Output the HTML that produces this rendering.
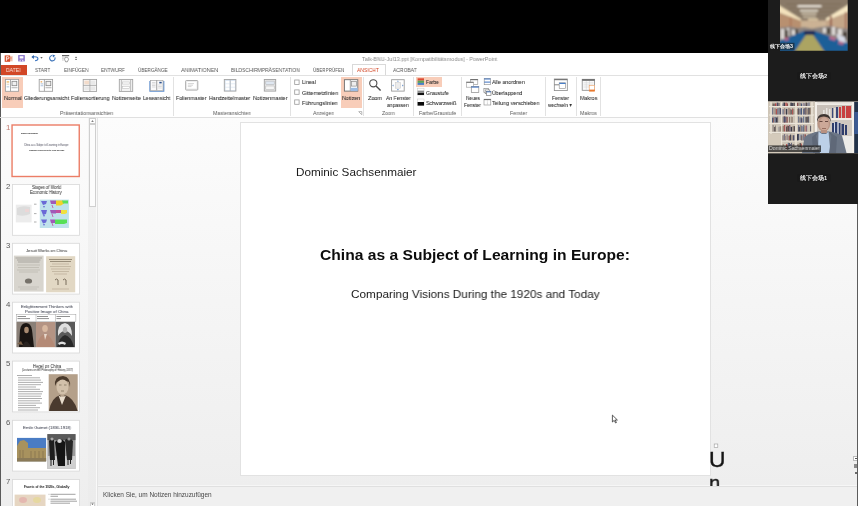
<!DOCTYPE html>
<html><head><meta charset="utf-8">
<style>
*{margin:0;padding:0;box-sizing:border-box}
html,body{width:858px;height:506px;overflow:hidden;background:#000;font-family:"Liberation Sans",sans-serif;position:relative}
.a{position:absolute}
.t{position:absolute;white-space:nowrap;line-height:1;transform-origin:0 0;will-change:transform}
.vl{will-change:transform}
svg{position:absolute;overflow:visible}
</style></head><body>
<div class="a" style="left:0px;top:53px;width:858px;height:453px;background:#fff;"></div>
<div class="a" style="left:0px;top:53px;width:1px;height:453px;background:#5a5a5a;"></div>
<div class="t" style="left:361.80px;top:56.86px;font-size:5.60px;color:#8a8a8a;transform:scaleX(0.968);">Talk-BNU-Jul13.ppt [Kompatibilitätsmodus] - PowerPoint</div>
<div class="a" style="left:1px;top:64.6px;width:26px;height:10.8px;background:#d24726;"></div>
<div class="a" style="left:0px;top:75px;width:858px;height:1px;background:#e1e1e1;"></div>
<div class="a" style="left:351.6px;top:64.3px;width:34px;height:11px;background:#fff;border:1px solid #d9d9d9;border-bottom:none"></div>
<div class="t" style="left:6.40px;top:67.42px;font-size:6.00px;color:#fbe3da;transform:scaleX(0.848);">DATEI</div>
<div class="t" style="left:34.70px;top:67.42px;font-size:6.00px;color:#555555;transform:scaleX(0.795);">START</div>
<div class="t" style="left:63.50px;top:67.42px;font-size:6.00px;color:#555555;transform:scaleX(0.790);">EINFÜGEN</div>
<div class="t" style="left:100.80px;top:67.42px;font-size:6.00px;color:#555555;transform:scaleX(0.793);">ENTWURF</div>
<div class="t" style="left:138.10px;top:67.42px;font-size:6.00px;color:#555555;transform:scaleX(0.775);">ÜBERGÄNGE</div>
<div class="t" style="left:180.90px;top:67.42px;font-size:6.00px;color:#555555;transform:scaleX(0.900);">ANIMATIONEN</div>
<div class="t" style="left:230.80px;top:67.42px;font-size:6.00px;color:#555555;transform:scaleX(0.831);">BILDSCHIRMPRÄSENTATION</div>
<div class="t" style="left:313.10px;top:67.42px;font-size:6.00px;color:#555555;transform:scaleX(0.755);">ÜBERPRÜFEN</div>
<div class="t" style="left:357.40px;top:67.42px;font-size:6.00px;color:#d24726;transform:scaleX(0.832);">ANSICHT</div>
<div class="t" style="left:392.80px;top:67.42px;font-size:6.00px;color:#555555;transform:scaleX(0.833);">ACROBAT</div>
<div class="a" style="left:0px;top:117px;width:858px;height:1px;background:#e0e0e0;"></div>
<div class="a" style="left:173px;top:76.5px;width:1px;height:39px;background:#e2e2e2;"></div>
<div class="a" style="left:290px;top:76.5px;width:1px;height:39px;background:#e2e2e2;"></div>
<div class="a" style="left:363px;top:76.5px;width:1px;height:39px;background:#e2e2e2;"></div>
<div class="a" style="left:413px;top:76.5px;width:1px;height:39px;background:#e2e2e2;"></div>
<div class="a" style="left:461px;top:76.5px;width:1px;height:39px;background:#e2e2e2;"></div>
<div class="a" style="left:545px;top:76.5px;width:1px;height:39px;background:#e2e2e2;"></div>
<div class="a" style="left:576px;top:76.5px;width:1px;height:39px;background:#e2e2e2;"></div>
<div class="a" style="left:600px;top:76.5px;width:1px;height:39px;background:#e2e2e2;"></div>
<div class="a" style="left:2.3px;top:77px;width:20.3px;height:30.8px;background:#f8cdb9;"></div>
<div class="a" style="left:341.2px;top:77px;width:20.5px;height:30.6px;background:#f8cdb9;"></div>
<div class="a" style="left:415.8px;top:77.3px;width:25.9px;height:9.5px;background:#f8cdb9;"></div>
<div class="t" style="left:3.70px;top:94.52px;font-size:6.00px;color:#262626;transform:scaleX(0.921);-webkit-text-stroke:0.05px #303030;">Normal</div>
<div class="t" style="left:23.60px;top:94.52px;font-size:6.00px;color:#262626;transform:scaleX(0.878);-webkit-text-stroke:0.05px #303030;">Gliederungsansicht</div>
<div class="t" style="left:71.00px;top:94.52px;font-size:6.00px;color:#262626;transform:scaleX(0.893);-webkit-text-stroke:0.05px #303030;">Foliensortierung</div>
<div class="t" style="left:111.70px;top:94.52px;font-size:6.00px;color:#262626;transform:scaleX(0.875);-webkit-text-stroke:0.05px #303030;">Notizenseite</div>
<div class="t" style="left:143.00px;top:94.52px;font-size:6.00px;color:#262626;transform:scaleX(0.853);-webkit-text-stroke:0.05px #303030;">Leseansicht</div>
<div class="t" style="left:176.40px;top:94.52px;font-size:6.00px;color:#262626;transform:scaleX(0.877);-webkit-text-stroke:0.05px #303030;">Folienmaster</div>
<div class="t" style="left:209.00px;top:94.52px;font-size:6.00px;color:#262626;transform:scaleX(0.878);-webkit-text-stroke:0.05px #303030;">Handzettelmaster</div>
<div class="t" style="left:253.00px;top:94.52px;font-size:6.00px;color:#262626;transform:scaleX(0.889);-webkit-text-stroke:0.05px #303030;">Notizenmaster</div>
<div class="t" style="left:342.30px;top:94.52px;font-size:6.00px;color:#262626;transform:scaleX(0.895);-webkit-text-stroke:0.05px #303030;">Notizen</div>
<div class="t" style="left:368.00px;top:94.52px;font-size:6.00px;color:#262626;transform:scaleX(0.913);-webkit-text-stroke:0.05px #303030;">Zoom</div>
<div class="t" style="left:385.80px;top:94.52px;font-size:6.00px;color:#262626;transform:scaleX(0.842);-webkit-text-stroke:0.05px #303030;">An Fenster</div>
<div class="t" style="left:466.00px;top:94.52px;font-size:6.00px;color:#262626;transform:scaleX(0.807);-webkit-text-stroke:0.05px #303030;">Neues</div>
<div class="t" style="left:552.40px;top:94.52px;font-size:6.00px;color:#262626;transform:scaleX(0.836);-webkit-text-stroke:0.05px #303030;">Fenster</div>
<div class="t" style="left:579.70px;top:94.52px;font-size:6.00px;color:#262626;transform:scaleX(0.880);-webkit-text-stroke:0.05px #303030;">Makros</div>
<div class="t" style="left:387.30px;top:101.92px;font-size:6.00px;color:#262626;transform:scaleX(0.834);-webkit-text-stroke:0.05px #303030;">anpassen</div>
<div class="t" style="left:464.20px;top:101.92px;font-size:6.00px;color:#262626;transform:scaleX(0.826);-webkit-text-stroke:0.05px #303030;">Fenster</div>
<div class="t" style="left:547.90px;top:101.92px;font-size:6.00px;color:#262626;transform:scaleX(0.795);-webkit-text-stroke:0.05px #303030;">wechseln ▾</div>
<div class="t" style="left:302.00px;top:79.32px;font-size:6.00px;color:#262626;transform:scaleX(0.862);-webkit-text-stroke:0.05px #303030;">Lineal</div>
<div class="t" style="left:302.00px;top:89.62px;font-size:6.00px;color:#262626;transform:scaleX(0.905);-webkit-text-stroke:0.05px #303030;">Gitternetzlinien</div>
<div class="t" style="left:302.00px;top:99.52px;font-size:6.00px;color:#262626;transform:scaleX(0.907);-webkit-text-stroke:0.05px #303030;">Führungslinien</div>
<div class="t" style="left:425.70px;top:79.22px;font-size:6.00px;color:#262626;transform:scaleX(0.823);-webkit-text-stroke:0.05px #303030;">Farbe</div>
<div class="t" style="left:425.70px;top:89.62px;font-size:6.00px;color:#262626;transform:scaleX(0.865);-webkit-text-stroke:0.05px #303030;">Graustufe</div>
<div class="t" style="left:425.70px;top:99.62px;font-size:6.00px;color:#262626;transform:scaleX(0.849);-webkit-text-stroke:0.05px #303030;">Schwarzweiß</div>
<div class="t" style="left:492.40px;top:79.32px;font-size:6.00px;color:#262626;transform:scaleX(0.886);-webkit-text-stroke:0.05px #303030;">Alle anordnen</div>
<div class="t" style="left:492.40px;top:89.62px;font-size:6.00px;color:#262626;transform:scaleX(0.882);-webkit-text-stroke:0.05px #303030;">Überlappend</div>
<div class="t" style="left:492.40px;top:99.52px;font-size:6.00px;color:#262626;transform:scaleX(0.894);-webkit-text-stroke:0.05px #303030;">Teilung verschieben</div>
<div class="t" style="left:60.30px;top:110.73px;font-size:5.40px;color:#5a5a5a;transform:scaleX(0.950);">Präsentationsansichten</div>
<div class="t" style="left:213.00px;top:110.73px;font-size:5.40px;color:#5a5a5a;transform:scaleX(0.959);">Masteransichten</div>
<div class="t" style="left:313.00px;top:110.73px;font-size:5.40px;color:#5a5a5a;transform:scaleX(0.933);">Anzeigen</div>
<div class="t" style="left:382.40px;top:110.73px;font-size:5.40px;color:#5a5a5a;transform:scaleX(0.935);">Zoom</div>
<div class="t" style="left:418.70px;top:110.73px;font-size:5.40px;color:#5a5a5a;transform:scaleX(0.949);">Farbe/Graustufe</div>
<div class="t" style="left:510.30px;top:110.73px;font-size:5.40px;color:#5a5a5a;transform:scaleX(0.929);">Fenster</div>
<div class="t" style="left:580.00px;top:110.73px;font-size:5.40px;color:#5a5a5a;transform:scaleX(0.960);">Makros</div>
<svg style="left:0;top:0" width="858" height="506" viewBox="0 0 858 506">
<!-- QAT -->
<rect x="9.2" y="55.9" width="3.5" height="5.5" fill="#f4cdbf"/>
<rect x="9.8" y="57.1" width="2.3" height="0.55" fill="#e58a6c"/><rect x="9.8" y="58.4" width="2.3" height="0.55" fill="#e58a6c"/><rect x="9.8" y="59.7" width="2.3" height="0.55" fill="#e58a6c"/>
<rect x="4.7" y="55.4" width="5.4" height="6.4" fill="#d64e2a"/>
<path d="M6.4 60.8 V56.7 H7.9 Q9.0 56.7 9.0 57.8 Q9.0 58.9 7.9 58.9 H6.4" fill="none" stroke="#fff" stroke-width="0.85"/>
<rect x="18.2" y="55.1" width="6.6" height="6.3" fill="#8670c8"/>
<rect x="19.6" y="56.2" width="3.8" height="2.3" fill="#fff"/>
<rect x="19.6" y="59.7" width="3.8" height="1.7" fill="#e8e2f6"/>
<rect x="20.7" y="60" width="1.4" height="1.4" fill="#8670c8"/>
<path d="M32.6 56.9 Q37.9 56.2 37.9 58.6 Q37.9 60.7 35 60.7" fill="none" stroke="#3f78c2" stroke-width="1.15"/>
<path d="M31.4 57 L33.9 55.1 L33.9 58.9 Z" fill="#2f62a8"/>
<path d="M40.3 57.1 L42.7 57.1 L41.5 58.8 Z" fill="#666"/>
<path d="M54.9 57.3 A2.7 2.7 0 1 1 52.1 55.5" fill="none" stroke="#3a72b8" stroke-width="1.05"/>
<path d="M52.4 54.6 L55.4 55.6 L53.0 57.4 Z" fill="#3a72b8"/>
<rect x="62" y="55.1" width="7.2" height="1.1" fill="#555"/>
<path d="M62.3 57.2 H63.6 M62.3 58.6 H63.6 M62.3 60 H63.6" stroke="#888" stroke-width="0.6"/>
<path d="M65 57.3 L67.6 57.3 L68.6 59.2 L67.4 61.8 L65.6 61.8 L64.6 59.5 Z" fill="none" stroke="#777" stroke-width="0.7"/>
<rect x="75.1" y="56.9" width="1.9" height="0.8" fill="#555"/><rect x="75.1" y="58.9" width="1.9" height="0.8" fill="#555"/>

<!-- Normal -->
<rect x="5.4" y="79.4" width="13.2" height="11.9" fill="#fff" stroke="#9c9c9c" stroke-width="0.85"/>
<line x1="10.5" y1="79.4" x2="10.5" y2="91.3" stroke="#9c9c9c" stroke-width="0.85"/>
<rect x="6.6" y="81" width="2.6" height="1.8" fill="#f0c98a"/><rect x="6.6" y="83.6" width="2.6" height="1.5" fill="#e8dccc"/><rect x="6.6" y="86" width="2.6" height="1.5" fill="#c9d6e6"/>
<rect x="12" y="81.3" width="4.8" height="4.4" fill="#f0f0f0" stroke="#858585" stroke-width="0.8"/>
<rect x="11.5" y="87" width="6" height="1.3" fill="#c4c4c4"/>
<!-- Gliederung -->
<rect x="39.2" y="79.4" width="13.4" height="11.9" fill="#fff" stroke="#9c9c9c" stroke-width="0.85"/>
<line x1="44.4" y1="79.4" x2="44.4" y2="91.3" stroke="#9c9c9c" stroke-width="0.85"/>
<rect x="40.6" y="81" width="1.6" height="1.6" fill="#f0b978"/><rect x="40.6" y="83.5" width="2.6" height="0.8" fill="#9bb3d3"/><rect x="40.6" y="85.4" width="2.6" height="0.8" fill="#9bb3d3"/>
<rect x="46" y="81.3" width="4.8" height="4.4" fill="#f0f0f0" stroke="#858585" stroke-width="0.8"/>
<rect x="45.5" y="87" width="6" height="1.3" fill="#c4c4c4"/>
<!-- Foliensortierung -->
<rect x="83.2" y="79.4" width="13.4" height="12" fill="#fafafa" stroke="#a0a0a0" stroke-width="0.85"/>
<rect x="84.3" y="80.6" width="4.8" height="3.8" fill="#f3dccb"/><rect x="90.6" y="80.6" width="4.8" height="3.8" fill="#e9e9e9"/>
<rect x="84.3" y="86.4" width="4.8" height="3.8" fill="#e9e9e9"/><rect x="90.6" y="86.4" width="4.8" height="3.8" fill="#e9e9e9"/>
<line x1="83.2" y1="85.4" x2="96.6" y2="85.4" stroke="#a0a0a0" stroke-width="0.8"/>
<line x1="89.9" y1="79.4" x2="89.9" y2="91.4" stroke="#a0a0a0" stroke-width="0.8"/>
<!-- Notizenseite -->
<rect x="119.3" y="79.4" width="13.4" height="12" fill="#f4f4f4" stroke="#a0a0a0" stroke-width="0.85"/>
<line x1="121.4" y1="80" x2="121.4" y2="91" stroke="#b0b0b0" stroke-width="0.8"/><line x1="130.6" y1="80" x2="130.6" y2="91" stroke="#b0b0b0" stroke-width="0.8"/>
<rect x="122.5" y="82" width="7" height="2" fill="#fff" stroke="#b8b8b8" stroke-width="0.5"/>
<rect x="122.5" y="86.3" width="7" height="2" fill="#fff" stroke="#b8b8b8" stroke-width="0.5"/>
<!-- Leseansicht -->
<path d="M149.9 81 L149.9 91.3 L163.8 91.3 L163.8 81" fill="none" stroke="#5b8ccc" stroke-width="1.1"/>
<rect x="150.6" y="80.3" width="6.1" height="10.3" fill="#fbfbfb" stroke="#9a9a9a" stroke-width="0.6"/>
<rect x="156.9" y="80.3" width="6.1" height="10.3" fill="#fbfbfb" stroke="#9a9a9a" stroke-width="0.6"/>
<path d="M152 82.5 H155.5 M152 84 H155.5 M152 85.5 H155.5 M152 87 H155.5" stroke="#bbb" stroke-width="0.5"/>
<rect x="159.3" y="81.8" width="2.4" height="1.6" fill="#2b4f8a"/>
<path d="M158.2 85 H161.8 M158.2 86.5 H161.8 M158.2 88 H161.8" stroke="#bbb" stroke-width="0.5"/>
<!-- Folienmaster -->
<rect x="185.6" y="80.5" width="12.2" height="9.6" rx="0.8" fill="#efefef" stroke="#a0a0a0" stroke-width="0.85"/>
<rect x="187" y="82" width="9.4" height="6.4" fill="#fff"/>
<path d="M187.8 83.6 H194 M187.8 85.2 H193 M187.8 86.6 H191.5" stroke="#b9b9b9" stroke-width="0.6"/>
<!-- Handzettelmaster -->
<rect x="224.3" y="79.5" width="11.6" height="11.6" fill="#d9e4f1" stroke="#a4a4a4" stroke-width="0.9"/>
<rect x="225.6" y="80.9" width="4" height="2.6" fill="#fff"/><rect x="230.9" y="80.9" width="4" height="2.6" fill="#fff"/>
<rect x="225.6" y="84.2" width="4" height="2.6" fill="#fff"/><rect x="230.9" y="84.2" width="4" height="2.6" fill="#fff"/>
<rect x="225.6" y="87.5" width="4" height="2.6" fill="#fff"/><rect x="230.9" y="87.5" width="4" height="2.6" fill="#fff"/>
<line x1="230.2" y1="79.5" x2="230.2" y2="91.1" stroke="#a4a4a4" stroke-width="0.6"/>
<!-- Notizenmaster -->
<rect x="264.3" y="79.5" width="11.4" height="11.6" fill="#e8e8e8" stroke="#a0a0a0" stroke-width="0.9"/>
<rect x="265.8" y="81.1" width="8.4" height="3.6" fill="#dfe7f1" stroke="#b0b0b0" stroke-width="0.5"/>
<rect x="265.8" y="86" width="8.4" height="3.6" fill="#f6f6f6" stroke="#b0b0b0" stroke-width="0.5"/>
<!-- checkboxes -->
<rect x="294.7" y="80" width="4.4" height="4.4" fill="#fff" stroke="#9a9a9a" stroke-width="0.8"/>
<rect x="294.7" y="89.9" width="4.4" height="4.4" fill="#fff" stroke="#9a9a9a" stroke-width="0.8"/>
<rect x="294.7" y="99.9" width="4.4" height="4.4" fill="#fff" stroke="#9a9a9a" stroke-width="0.8"/>
<!-- Notizen -->
<rect x="344.4" y="79.7" width="13.4" height="11.4" fill="#fff" stroke="#6e6e6e" stroke-width="0.9"/>
<line x1="350.3" y1="79.7" x2="350.3" y2="91.1" stroke="#8a8a8a" stroke-width="0.8"/>
<rect x="351.6" y="81.5" width="4.8" height="4.6" fill="#eee" stroke="#8a8a8a" stroke-width="0.7"/>
<rect x="350.5" y="87.8" width="7.2" height="3.2" fill="#9cbce4"/>
<!-- launcher -->
<path d="M358.6 111.6 H361.8 V114.8 M358.8 111.8 L361.6 114.6" fill="none" stroke="#888" stroke-width="0.6"/>
<!-- Zoom -->
<circle cx="373.3" cy="83.3" r="3.6" fill="none" stroke="#4a4a4a" stroke-width="1.1"/>
<line x1="376" y1="86" x2="380.6" y2="90.6" stroke="#4a4a4a" stroke-width="1.4"/>
<!-- An Fenster anpassen -->
<rect x="391.6" y="79.7" width="12.6" height="11.4" fill="#fff" stroke="#9a9a9a" stroke-width="0.9"/>
<rect x="395.2" y="82.6" width="5.4" height="5.6" fill="#ececec" stroke="#c4c4c4" stroke-width="0.5"/>
<path d="M397.9 80.4 L396.9 81.6 H398.9 Z M397.9 90.4 L396.9 89.2 H398.9 Z M392.3 85.4 L393.5 84.4 V86.4 Z M403.5 85.4 L402.3 84.4 V86.4 Z" fill="#4f7fc0"/>
<!-- Farbe swatches -->
<rect x="417.6" y="78.3" width="6.4" height="2.3" fill="#dc4a33"/>
<rect x="417.6" y="80.6" width="6.4" height="2.3" fill="#5ba35a"/>
<rect x="417.6" y="82.9" width="6.4" height="2" fill="#4a7fc8"/>
<rect x="417.6" y="88.2" width="6.4" height="6.8" fill="#fff" stroke="#c8c8c8" stroke-width="0.5"/>
<rect x="417.6" y="90.6" width="6.4" height="1.6" fill="#8c8c8c"/>
<rect x="417.6" y="92.6" width="6.4" height="2.4" fill="#111"/>
<rect x="417.6" y="99" width="6.4" height="6.6" fill="#fff" stroke="#c8c8c8" stroke-width="0.5"/>
<rect x="417.6" y="102" width="6.4" height="3.6" fill="#0a0a0a"/>
<!-- Neues Fenster -->
<rect x="470.6" y="79.3" width="7.2" height="5" fill="#fff" stroke="#8a8a8a" stroke-width="0.6"/>
<rect x="470.6" y="79.1" width="7.2" height="1.1" fill="#6a6a6a"/>
<rect x="466.4" y="82" width="7.2" height="5.2" fill="#fff" stroke="#9a9a9a" stroke-width="0.6"/>
<rect x="466.4" y="81.9" width="7.2" height="1" fill="#7a7a7a"/>
<rect x="471.3" y="86.6" width="7.5" height="5.8" fill="#fff" stroke="#8a8a8a" stroke-width="0.7"/>
<rect x="471.3" y="86.5" width="7.5" height="1.1" fill="#3f72c0"/>
<!-- Alle anordnen -->
<rect x="484.2" y="78.5" width="6.2" height="6.2" fill="#fff" stroke="#8a8a8a" stroke-width="0.6"/>
<rect x="484.2" y="78.5" width="6.2" height="1" fill="#3f72c0"/><rect x="484.2" y="81.6" width="6.2" height="1" fill="#3f72c0"/>
<!-- Ueberlappend -->
<rect x="483.9" y="88.6" width="4.6" height="3.8" fill="#fff" stroke="#7a7a7a" stroke-width="0.6"/>
<rect x="485.2" y="89.9" width="4.6" height="3.8" fill="#fff" stroke="#7a7a7a" stroke-width="0.6"/>
<rect x="486.4" y="91.4" width="4.6" height="4" fill="#fff" stroke="#6a6a6a" stroke-width="0.6"/>
<rect x="486.4" y="91.4" width="4.6" height="0.9" fill="#3f72c0"/>
<!-- Teilung -->
<rect x="484" y="99.2" width="6.8" height="5.8" fill="#fff" stroke="#8a8a8a" stroke-width="0.6"/>
<rect x="484" y="99.1" width="6.8" height="1" fill="#6a6a6a"/>
<path d="M487.4 100.5 V104.8" stroke="#999" stroke-width="0.5" stroke-dasharray="0.8 0.5"/>
<!-- Fenster wechseln -->
<rect x="554.3" y="79" width="13" height="11.6" fill="#fff" stroke="#8a8a8a" stroke-width="0.8"/>
<rect x="554.3" y="79" width="13" height="1.2" fill="#777"/>
<line x1="554.3" y1="84.8" x2="559" y2="84.8" stroke="#777" stroke-width="0.9"/>
<rect x="559.2" y="82.8" width="6.4" height="5.6" fill="#fff" stroke="#888" stroke-width="0.6"/>
<rect x="559.2" y="82.8" width="6.4" height="1.2" fill="#4a7fc8"/>
<!-- Makros -->
<rect x="582.2" y="79.3" width="12.4" height="11" fill="#fafafa" stroke="#8a8a8a" stroke-width="0.8"/>
<rect x="582.2" y="79.2" width="12.4" height="1.6" fill="#666"/>
<path d="M583.5 82.8 H593.5 M583.5 84.9 H593.5 M583.5 87 H593.5 M586.3 81 V90 M589.5 81 V90" stroke="#cfcfcf" stroke-width="0.5"/>
<rect x="589.2" y="85.3" width="5.4" height="5.8" fill="#fff" stroke="#f0a060" stroke-width="0.6"/>
<rect x="589.2" y="89.6" width="5.6" height="1.8" fill="#e8782e"/>
</svg>

<!-- main area backgrounds -->
<div class="a" style="left:1px;top:118px;width:87px;height:388px;background:linear-gradient(#fcfcfc,#eeeeee)"></div>
<div class="a" style="left:88px;top:118px;width:8px;height:388px;background:linear-gradient(#f3f3f3,#ececec)"></div>
<div class="a" style="left:88.5px;top:118px;width:7.5px;height:6px;background:#fff;border:0.6px solid #cfcfcf"></div>
<div class="a" style="left:88.5px;top:124px;width:7.5px;height:83px;background:#fcfcfc;border:0.6px solid #cfcfcf"></div>
<div class="a" style="left:89.8px;top:501.5px;width:5.4px;height:5px;background:#fff;border:0.6px solid #cfcfcf"></div>
<div class="a" style="left:96px;top:118px;width:1px;height:388px;background:#f9f9f9"></div>
<div class="a" style="left:97px;top:118px;width:1px;height:388px;background:#e4e4e4"></div>
<div class="a" style="left:98px;top:118px;width:760px;height:368px;background:linear-gradient(#fcfcfc,#eeeeee)"></div>
<div class="a" style="left:98px;top:486px;width:760px;height:1px;background:#e0e0e0"></div>
<div class="a" style="left:98px;top:487px;width:760px;height:19px;background:#f0f0f0"></div>
<!-- slide -->
<div class="a" style="left:240px;top:122px;width:471px;height:354px;background:#e2e2e2"></div>
<div class="a" style="left:241px;top:123px;width:469px;height:352px;background:#fff"></div>
<!-- right edge line -->
<div class="a" style="left:857px;top:53px;width:1px;height:453px;background:#5c5c5c"></div>
<div class="a" style="left:853px;top:455.8px;width:4px;height:5.5px;background:#fff;border:0.5px solid #bbb;border-right:none"></div>
<div class="a" style="left:854.5px;top:458px;width:2.5px;height:0.9px;background:#555"></div>
<div class="a" style="left:853.6px;top:464.3px;width:3.4px;height:3.4px;background:#8a8a8a"></div>
<div class="a" style="left:854.8px;top:472.2px;width:2.2px;height:2px;background:#6a6a6a"></div>
<div class="a" style="left:98px;top:484.5px;width:759px;height:1.2px;background:#f6f6f6"></div>
<!-- thumbnails -->
<svg style="left:0;top:0" width="858" height="506" viewBox="0 0 858 506">
<defs>
<linearGradient id="gb1" x1="0" y1="0" x2="0" y2="1"><stop offset="0" stop-color="#d9d6cf"/><stop offset="1" stop-color="#cfcac0"/></linearGradient>
<linearGradient id="gb2" x1="0" y1="0" x2="0" y2="1"><stop offset="0" stop-color="#e6dcc6"/><stop offset="1" stop-color="#d9ccb0"/></linearGradient>
<linearGradient id="sky" x1="0" y1="0" x2="0" y2="1"><stop offset="0" stop-color="#3d6fc0"/><stop offset="0.5" stop-color="#6b8fc8"/><stop offset="1" stop-color="#9a8a68"/></linearGradient>
</defs>
<!-- 1 -->
<rect x="12.05" y="125.0" width="67.2" height="51.5" fill="#fff" stroke="#ec7d66" stroke-width="1.4"/>
<!-- 2..7 frames -->
<rect x="12.5" y="184.5" width="67" height="50.8" fill="#fff" stroke="#d8d8d8" stroke-width="0.8"/>
<rect x="12.5" y="243.3" width="67" height="50.8" fill="#fff" stroke="#d8d8d8" stroke-width="0.8"/>
<rect x="12.5" y="302.2" width="67" height="50.8" fill="#fff" stroke="#d8d8d8" stroke-width="0.8"/>
<rect x="12.5" y="361.1" width="67" height="50.8" fill="#fff" stroke="#d8d8d8" stroke-width="0.8"/>
<rect x="12.5" y="420.3" width="67" height="50.8" fill="#fff" stroke="#d8d8d8" stroke-width="0.8"/>
<rect x="12.5" y="479.5" width="67" height="50.8" fill="#fff" stroke="#d8d8d8" stroke-width="0.8"/>
<!-- 2 images -->
<rect x="15.8" y="204.7" width="15.8" height="17.7" fill="#ececec"/>
<path d="M17 208 Q22 205 30 207 L30 214 Q24 217 17 215 Z" fill="#dcdcdc"/>
<rect x="25" y="209" width="4" height="3" fill="#ecd6d6"/>
<rect x="39.8" y="199.6" width="29.1" height="28.4" fill="#bfe2ec"/>
<path d="M41 201 h6 l-1 3 l-3 1 z M41 210 h6 l-1 4 l-3 1 z M41 219.5 h6 l-1 3 l-3 1 z" fill="#6a6ad6"/>
<path d="M43 206 l2 0 l-1 2 z M43 215 l2 0 l-1 2 z M43 224 l2 0 l-1 2 z" fill="#6a6ad6"/>
<path d="M50 200.5 h6 v3.5 h-5 z M50 210 h6 v3.5 h-5 z M50 219.5 h5 v3.5 h-4 z" fill="#a05ab8"/>
<path d="M56 200.5 h7 l1 3 l-3 2 h-5 z" fill="#f2d22a"/><path d="M62 200.5 h6 v3 h-5 z" fill="#5ce05c"/>
<path d="M56 210 h5 v3 h-5 z" fill="#c050a0"/><path d="M61 210 h6 v3 l-2 1 h-4 z" fill="#f0e040"/>
<path d="M55 219.5 h12 v3.5 l-3 1 h-9 z" fill="#56e056"/>
<path d="M52 205 l1 3 M52 214 l1 3 M52 223 l1 3" stroke="#c050a0" stroke-width="0.8"/>
<path d="M34 204.2 H36.5 M34 213.6 H36.5 M34 222 H36.5" stroke="#777" stroke-width="0.6"/>
<!-- 3 books -->
<rect x="13.9" y="255.6" width="29.7" height="36" fill="#d8d5ce"/>
<path d="M15.5 258 H42 M17 260 H40.5 M18 262 H39.5" stroke="#8c8880" stroke-width="0.6"/>
<path d="M17 265 H40 M18 267.5 H39 M17 270 H40 M19 272 H38" stroke="#aca89f" stroke-width="0.5"/>
<ellipse cx="28.5" cy="281" rx="3.6" ry="2.6" fill="#76726a"/>
<path d="M18 287 H39 M20 289 H37" stroke="#b0aca4" stroke-width="0.5"/>
<rect x="46.1" y="256.2" width="29.1" height="36.1" fill="#e2d8c4"/>
<path d="M49 259.5 H72 M50 261.5 H71" stroke="#7a6e5c" stroke-width="0.7"/>
<path d="M52 264 H69 M50 266.5 H71 M51 269 H70 M52 271.5 H69 M54 274 H67" stroke="#a89a84" stroke-width="0.5"/>
<path d="M55 280 q1.5 -2 3 0 v5 M63 280 q1.5 -2 3 0 v5" fill="none" stroke="#6e6250" stroke-width="0.9"/>
<path d="M52 289 H69" stroke="#a89a84" stroke-width="0.5"/>
<!-- 4 table + portraits -->
<rect x="16.4" y="314.3" width="59.5" height="7" fill="#fff" stroke="#888" stroke-width="0.4"/>
<path d="M36 314.3 V321.3 M55.5 314.3 V321.3" stroke="#888" stroke-width="0.4"/>
<path d="M17.5 316.5 H26 M17.5 318.6 H30 M37 316.5 H48 M37 318.6 H49 M56.5 316.5 H70 M56.5 318.6 H61" stroke="#444" stroke-width="0.6"/>
<rect x="16.4" y="322" width="19.6" height="25.2" fill="#8a8078"/>
<path d="M19 347 L20 330 Q21 323 26 323 Q31 323 32 330 L34 347 Z" fill="#1a1512"/>
<ellipse cx="26.5" cy="330" rx="2.3" ry="3.2" fill="#a88a70"/>
<path d="M22 347 Q26 336 31 347 Z" fill="#2a2420"/>
<path d="M17 344 l4 -3 l2 4 z" fill="#7a6048"/>
<rect x="36" y="322" width="19.5" height="25.2" fill="#b49484"/>
<ellipse cx="45" cy="328.5" rx="2.8" ry="3.6" fill="#d8b8a0"/>
<path d="M36.5 347 Q38 336 45 334 Q52 336 55 347 Z" fill="#b48a76"/>
<path d="M44 334 l1 6 l2 -6 z" fill="#e8d8cc"/>
<rect x="55.5" y="322" width="19.5" height="25.2" fill="#5a5a5a"/>
<path d="M58 336 Q57 324 65 323 Q72 324 72 336 Q69 331 65 331 Q61 331 58 336 Z" fill="#e0e0e0"/>
<ellipse cx="65" cy="330" rx="2.2" ry="3" fill="#b0b0b0"/>
<path d="M57 347 Q60 336 65 335 Q71 336 74 347 Z" fill="#2a2a2a"/>
<path d="M58 343 q4 -3 8 0 l-1 2 q-3 -2 -6 0 z" fill="#e0e0e0"/>
<!-- 5 text + hegel -->
<path d="M17 375.5 H32 M18 377.8 H40 M18 380.1 H41 M18 382.4 H43 M18 384.7 H41 M18 387 H36 M18 389.3 H40 M18 391.6 H43 M18 393.9 H42 M18 396.2 H41 M18 398.5 H42 M18 400.8 H40 M18 403.1 H42 M18 405.4 H36 M18 407.7 H40 M18 410 H38" stroke="#6a6a6a" stroke-width="0.55"/>
<rect x="48.7" y="374.2" width="29" height="36.7" fill="#b4a08a"/>
<path d="M55 386 Q54 376 63 376 Q71 377 70 387 L69 382 Q63 379 57 382 Z" fill="#4a3a2c"/>
<ellipse cx="62.5" cy="387" rx="6" ry="7.5" fill="#d2c0aa"/>
<path d="M59 385 h2.5 M64 385 h2.5 M61 391 h3" stroke="#6a5a48" stroke-width="0.6"/>
<path d="M49 410.9 Q51 398 60 395 Q62 400 65 395 Q74 398 77.7 410.9 Z" fill="#4a3a2e"/>
<path d="M58.5 395.5 L62 405 L66 395.5 Q62 398 58.5 395.5 Z" fill="#e8dccc"/>
<!-- 6 photos -->
<rect x="17" y="437.9" width="29.1" height="23.4" fill="#4a7cc4"/>
<rect x="17" y="450" width="29.1" height="11.3" fill="#b09a72"/>
<path d="M17 461.3 V446 L20 441 L24 440 L28 443 V448 L46.1 448 V461.3 Z" fill="#a8925e"/>
<path d="M20 450 v8 M23 450 v8 M31 451 v7 M35 451 v7 M39 451 v7 M43 451 v7" stroke="#7a6a48" stroke-width="0.6"/>
<rect x="17" y="458" width="29.1" height="3.3" fill="#8a7a58"/>
<rect x="47.4" y="434.1" width="28.1" height="34.8" fill="#9a9a9a"/>
<rect x="47.4" y="434.1" width="28.1" height="6" fill="#5a5a5a"/>
<rect x="47.4" y="456" width="28.1" height="12.9" fill="#cfcfcf"/>
<path d="M49 441 Q51 437 54 440 L55 460 H50 Z" fill="#1e1e1e"/>
<path d="M55 442 Q60 436 65 442 L65 466 H58 Z" fill="#141414"/>
<path d="M65 440 Q69 436 73 441 L72 460 H67 Z" fill="#262626"/>
<path d="M51 460 v6 M53.5 460 v5 M68 460 v5 M70.5 460 v4" stroke="#222" stroke-width="1"/>
<ellipse cx="59.5" cy="441" rx="2.3" ry="2" fill="#d8d8d8"/>
<ellipse cx="52" cy="439" rx="1.6" ry="1.6" fill="#aaa"/>
<ellipse cx="69" cy="439" rx="1.6" ry="1.6" fill="#999"/>
<!-- 7 -->
<rect x="14.6" y="494.6" width="30.9" height="12" fill="#e6d6c2"/>
<ellipse cx="23" cy="500" rx="4" ry="3" fill="#e4b8b0"/><ellipse cx="37" cy="500" rx="4" ry="3" fill="#e6d8a0"/>
<path d="M48.5 494.3 H49.5 M48.5 499.2 H49.5" stroke="#888" stroke-width="0.6"/><path d="M50.5 494.3 H75.5 M50.5 496.3 H58 M50.5 499.2 H76 M50.5 501.2 H77 M50.5 503.2 H70" stroke="#444" stroke-width="0.5"/>
<path d="M91.2 503.4 L93.8 503.4 L92.5 505 Z" fill="#555"/>
<path d="M91.2 121.8 L93.8 121.8 L92.5 120.2 Z" fill="#555"/>
<!-- cursor -->
<path d="M612.4 415.1 L612.4 422 L614.2 420.4 L615.6 423 L616.4 422.6 L615.2 420 L617.4 420 Z" fill="#fff" stroke="#333" stroke-width="0.8" stroke-linejoin="round"/>
<!-- U overlay small square -->
<rect x="714.2" y="444" width="3.6" height="3.6" fill="#fff" stroke="#999" stroke-width="0.6"/>
</svg>

<div class="t" style="left:295.90px;top:167.43px;font-size:11.30px;color:#1a1a1a;transform:scaleX(1.037);">Dominic Sachsenmaier</div>
<div class="t" style="left:320.20px;top:246.88px;font-size:15.50px;color:#0d0d0d;font-weight:bold;transform:scaleX(1.008);">China as a Subject of Learning in Europe:</div>
<div class="t" style="left:351.10px;top:289.21px;font-size:11.80px;color:#1a1a1a;transform:scaleX(0.997);">Comparing Visions During the 1920s and Today</div>
<div class="t" style="left:103.00px;top:491.58px;font-size:6.40px;color:#484848;transform:scaleX(1.013);">Klicken Sie, um Notizen hinzuzufügen</div>
<div class="t" style="left:708.50px;top:448.00px;font-size:22.80px;color:#151515;transform:scaleX(1.000);-webkit-text-stroke:0.35px #151515;">U</div>
<div class="a" style="left:700px;top:476px;width:40px;height:10px;overflow:hidden"><div class="t" style="left:9.3px;top:-2.6px;font-size:22px;color:#151515;-webkit-text-stroke:0.35px #151515;transform:scaleX(0.92)">n</div></div>
<div class="t" style="left:5.90px;top:123.80px;font-size:7.80px;color:#c07a70;transform:scaleX(1.000);">1</div>
<div class="t" style="left:5.90px;top:183.20px;font-size:7.80px;color:#5a5a5a;transform:scaleX(1.000);">2</div>
<div class="t" style="left:5.90px;top:242.20px;font-size:7.80px;color:#5a5a5a;transform:scaleX(1.000);">3</div>
<div class="t" style="left:5.90px;top:301.20px;font-size:7.80px;color:#5a5a5a;transform:scaleX(1.000);">4</div>
<div class="t" style="left:5.90px;top:360.30px;font-size:7.80px;color:#5a5a5a;transform:scaleX(1.000);">5</div>
<div class="t" style="left:5.90px;top:419.40px;font-size:7.80px;color:#5a5a5a;transform:scaleX(1.000);">6</div>
<div class="t" style="left:5.90px;top:478.30px;font-size:7.80px;color:#5a5a5a;transform:scaleX(1.000);">7</div>
<div class="t" style="left:20.90px;top:132.34px;font-size:2.20px;color:#111;font-weight:bold;transform:scaleX(0.706);">Dominic Sachsenmaier</div>
<div class="t" style="left:24.00px;top:143.53px;font-size:2.80px;color:#4a4a5a;transform:scaleX(0.866);">China as a Subject of Learning in Europe:</div>
<div class="t" style="left:29.00px;top:149.34px;font-size:2.20px;color:#222;font-weight:bold;transform:scaleX(0.713);">Comparing Visions During the 1920s and Today</div>
<div class="t" style="left:31.60px;top:185.91px;font-size:4.60px;color:#222;transform:scaleX(0.892);">Stages of World</div>
<div class="t" style="left:30.30px;top:190.71px;font-size:4.60px;color:#222;transform:scaleX(0.886);">Economic History</div>
<div class="t" style="left:25.90px;top:248.74px;font-size:4.20px;color:#222;transform:scaleX(0.980);">Jesuit Works on China</div>
<div class="t" style="left:20.90px;top:305.48px;font-size:4.40px;color:#262a3a;transform:scaleX(0.939);">Enlightenment Thinkers with</div>
<div class="t" style="left:24.70px;top:310.28px;font-size:4.40px;color:#262a3a;transform:scaleX(0.938);">Positive Image of China</div>
<div class="t" style="left:32.60px;top:365.14px;font-size:4.80px;color:#222;transform:scaleX(0.849);">Hegel on China</div>
<div class="t" style="left:21.50px;top:370.20px;font-size:2.60px;color:#222;transform:scaleX(0.988);">(Lectures on the Philosophy of History, 1837)</div>
<div class="t" style="left:22.80px;top:425.88px;font-size:4.40px;color:#262a3a;transform:scaleX(0.930);">Emile Guimet (1836-1918)</div>
<div class="t" style="left:23.90px;top:484.84px;font-size:4.20px;color:#222;font-weight:bold;transform:scaleX(0.788);">Facets of the 1920s, Globally</div>
<div class="a" style="left:768px;top:0;width:90px;height:204px;background:#1c1c1c"></div>
<svg style="left:0;top:0" width="858" height="506" viewBox="0 0 858 506">
<defs><filter id="bl" x="-5%" y="-5%" width="110%" height="110%"><feGaussianBlur stdDeviation="0.55"/></filter><filter id="bl2" x="-5%" y="-5%" width="110%" height="110%"><feGaussianBlur stdDeviation="0.8"/></filter>
<linearGradient id="ceil" x1="0" y1="0" x2="0" y2="1"><stop offset="0" stop-color="#8a7f70"/><stop offset="0.6" stop-color="#b8aa92"/><stop offset="1" stop-color="#d8c4a0"/></linearGradient>
<linearGradient id="wall" x1="0" y1="0" x2="0" y2="1"><stop offset="0" stop-color="#c0a080"/><stop offset="1" stop-color="#a08060"/></linearGradient>
<linearGradient id="carpet" x1="0" y1="0" x2="0" y2="1"><stop offset="0" stop-color="#8e9a5a"/><stop offset="1" stop-color="#b4b070"/></linearGradient>
<linearGradient id="shelf" x1="0" y1="0" x2="1" y2="0"><stop offset="0" stop-color="#bdb2a2"/><stop offset="1" stop-color="#e6e2dc"/></linearGradient>
</defs>
<!-- conference room -->
<clipPath id="cc"><rect x="780" y="0" width="67.7" height="50.8"/></clipPath>
<g clip-path="url(#cc)"><g filter="url(#bl2)">
<rect x="777" y="-3" width="74" height="57" fill="#7a6a5a"/>
<path d="M777 -3 H851 V8 L828 20 H800 L777 8 Z" fill="#8a7a68"/>
<path d="M786 4.2 H842 M789 8.2 H838 M792 12 H835 M796 15.5 H831" stroke="#7a6a58" stroke-width="0.8"/>
<rect x="797.5" y="5.4" width="24" height="1.6" fill="#fffaf0"/>
<rect x="800" y="10" width="18" height="1.4" fill="#f6f0e0"/>
<rect x="801.5" y="13.2" width="15" height="1.2" fill="#eee4cc"/>
<rect x="803" y="16.4" width="13" height="1.1" fill="#e8dcc0"/>
<path d="M777 4 L801 19 L801 21 L777 12 Z" fill="#f4e2bc"/>
<path d="M851 3 L826 18.5 L826 21 L851 11 Z" fill="#f8e8c4"/>
<rect x="808" y="18.8" width="10" height="1.6" fill="#f0dcb4"/>
<path d="M777 12 L801 21 V30 H777 Z" fill="#b89070"/>
<path d="M851 11 L826 21 V32 H851 Z" fill="#c4a688"/>
<rect x="801" y="20.5" width="25" height="10" fill="#cdb496"/>
<path d="M804 21 V30 M808 21 V30 M812 21 V30 M816 21 V30 M820 21 V30" stroke="#c4ac8c" stroke-width="0.6"/>
<rect x="830" y="16" width="1.6" height="16" fill="#8a4a3a"/><rect x="845" y="12" width="1.4" height="20" fill="#9a5a48"/>
<rect x="790" y="17" width="1.2" height="13" fill="#a86a50"/>
<path d="M777 28 L790 26.5 L798 28 L804 27 L812 28.5 L820 27 L830 26 L840 28 L851 29 V45 L815 31 H804 L777 43 Z" fill="#8c8480"/>
<path d="M781 29 h3 v10 h-3 z M787 28 h2 v8 h-2 z M792 30 h3 v5 h-3 z M832 27 h3 v8 h-3 z M838 29 h4 v6 h-4 z M823 28 h3 v5 h-3 z" fill="#e0dcd8"/>
<path d="M785 30 h3 v8 h-3 z M795 29 h3 v5 h-3 z M827 28 h3 v6 h-3 z M843 32 h4 v8 h-4 z" fill="#4a4038"/>
<path d="M777 42 L804 31 L806 35 L793 54 H777 Z" fill="#1f5f98"/>
<path d="M851 44 L815 31 L813 35 L826 54 H851 Z" fill="#1f5f98"/>
<path d="M830 36 l6 2 l-1 3 l-6 -2 z M839 40 l5 2 l-1 3 l-5 -1 z M784 38 l4 -1 l1 3 l-4 1 z" fill="#d86a8a" opacity="0.8"/>
<path d="M836 34 l9 3 l1 6 l-7 -2 z" fill="#d8dce8"/>
<rect x="804" y="30.8" width="11" height="4.2" fill="#142a5a"/>
<path d="M806 35 L813 35 L826 54 L793 54 Z" fill="#aca462"/>
</g></g>
<rect x="768.5" y="42.8" width="26" height="7" fill="#1a1a1a" opacity="0.6"/>
<!-- man video -->
<g filter="url(#bl)">
<rect x="768" y="101.5" width="90" height="51.7" fill="#ddd6cc"/>
<rect x="768" y="101.5" width="47" height="51.7" fill="#cfc6b8"/>
<path d="M769 106.5 H814 M769 115 H814 M769 123.5 H814 M769 132.5 H814 M769 141 H814" stroke="#ece6dc" stroke-width="1.1"/>
<path d="M771 102 V150 M781.5 102 V150 M796 102 V150 M812 102 V150" stroke="#ebe4d8" stroke-width="1.4"/>
<path d="M772.5 107.5 h1 v7 h-1z M774.5 108 h1 v6.5 h-1z M776.5 109 h1.2 v5.5 h-1.2z M778.5 108 h1 v6.5 h-1z" fill="#8a8080"/>
<path d="M784 108 h1.2 v6.5 h-1.2z M786 109 h1 v5.5 h-1z M788 108 h1.3 v6.5 h-1.3z M790 109 h1 v5.5 h-1z M792 108 h1.2 v6.5 h-1.2z" fill="#a89088"/>
<path d="M798 103 h1.3 v3 h-1.3z M800 103 h1.2 v3 h-1.2z M803 103 h1.5 v3 h-1.5z M806 103 h1.2 v3 h-1.2z" fill="#9a8a9a"/>
<path d="M798 108 h1.2 v6.5 h-1.2z M800.5 108 h1.3 v6.5 h-1.3z M803 109 h1 v5.5 h-1z M805 108 h1.3 v6.5 h-1.3z M807.5 108 h1.2 v6.5 h-1.2z" fill="#7a8098"/>
<path d="M784 116.5 h1.5 v6 h-1.5z M786.5 117 h1.2 v5.5 h-1.2z" fill="#b84848"/>
<path d="M789 117 h1.2 v5.5 h-1.2z M791.5 117 h1.2 v5.5 h-1.2z" fill="#8a7a70"/>
<path d="M772.5 116.5 h1.2 v6 h-1.2z M775 117 h1 v5.5 h-1z M777 116.5 h1.3 v6 h-1.3z" fill="#9a9090"/>
<path d="M798 116.5 h1.3 v6 h-1.3z M800.5 117 h1.2 v5.5 h-1.2z M803 116.5 h1.2 v6 h-1.2z M805.5 117 h1.3 v5.5 h-1.3z M808 116.5 h1.2 v6 h-1.2z" fill="#6a7890"/>
<path d="M772.5 125 h1.2 v6.5 h-1.2z M775 125.5 h1 v6 h-1z" fill="#8e8480"/>
<path d="M784 125 h1.3 v6.5 h-1.3z M786.5 125.5 h1.2 v6 h-1.2z M789 125 h1.2 v6.5 h-1.2z" fill="#a85858"/>
<path d="M798 125 h1.3 v6.5 h-1.3z M800.5 125.5 h1.2 v6 h-1.2z M803 125 h1.3 v6.5 h-1.3z M806 125.5 h1.2 v6 h-1.2z" fill="#7a809a"/>
<path d="M784 134 h1.2 v6 h-1.2z M786.5 134.5 h1.2 v5.5 h-1.2z" fill="#8a7880"/>
<path d="M798 134 h1.3 v6 h-1.3z M800.5 134.5 h1.2 v5.5 h-1.2z" fill="#5a6888"/>
<rect x="772.0" y="103.4" width="1.0" height="2.6" fill="#a09080"/>
<rect x="773.2" y="103.5" width="1.5" height="2.5" fill="#5a5050"/>
<rect x="775.0" y="103.3" width="1.5" height="2.7" fill="#b04a4a"/>
<rect x="776.8" y="102.6" width="1.5" height="3.4" fill="#50506a"/>
<rect x="778.5" y="103.0" width="1.0" height="3.0" fill="#5a5050"/>
<rect x="782.5" y="103.5" width="0.8" height="2.5" fill="#6a7088"/>
<rect x="783.5" y="102.6" width="1.5" height="3.4" fill="#3a3a4a"/>
<rect x="785.3" y="102.7" width="1.5" height="3.3" fill="#b04a4a"/>
<rect x="787.0" y="103.4" width="1.0" height="2.6" fill="#8a5050"/>
<rect x="790.4" y="102.7" width="1.5" height="3.3" fill="#3a3a4a"/>
<rect x="792.1" y="103.0" width="1.5" height="3.0" fill="#3a3a4a"/>
<rect x="793.9" y="102.8" width="1.0" height="3.2" fill="#5a5050"/>
<rect x="797.0" y="102.8" width="1.2" height="3.2" fill="#8a5050"/>
<rect x="798.5" y="102.6" width="1.2" height="3.4" fill="#a09080"/>
<rect x="799.9" y="103.3" width="0.8" height="2.7" fill="#a09080"/>
<rect x="801.0" y="103.5" width="1.2" height="2.5" fill="#4a5a7a"/>
<rect x="804.5" y="103.4" width="0.8" height="2.6" fill="#6a7088"/>
<rect x="805.6" y="102.6" width="1.5" height="3.4" fill="#5a5050"/>
<rect x="807.3" y="102.9" width="0.8" height="3.1" fill="#7a7a8a"/>
<rect x="808.4" y="102.5" width="1.2" height="3.5" fill="#6a7088"/>
<rect x="772.0" y="107.6" width="0.8" height="6.9" fill="#6a7088"/>
<rect x="774.8" y="108.9" width="0.8" height="5.6" fill="#9a8a7a"/>
<rect x="775.9" y="108.8" width="1.0" height="5.7" fill="#b04a4a"/>
<rect x="777.1" y="108.3" width="1.5" height="6.2" fill="#7a7a8a"/>
<rect x="778.9" y="107.6" width="0.8" height="6.9" fill="#7a7a8a"/>
<rect x="779.9" y="108.1" width="1.2" height="6.4" fill="#50506a"/>
<rect x="782.5" y="109.1" width="1.2" height="5.4" fill="#6a7088"/>
<rect x="785.8" y="108.9" width="1.5" height="5.6" fill="#3a3a4a"/>
<rect x="789.1" y="108.2" width="1.2" height="6.3" fill="#9a8a7a"/>
<rect x="790.6" y="109.6" width="1.2" height="4.9" fill="#5a5050"/>
<rect x="792.0" y="109.1" width="0.8" height="5.4" fill="#b04a4a"/>
<rect x="793.1" y="108.9" width="1.2" height="5.6" fill="#9a8a7a"/>
<rect x="797.0" y="108.8" width="1.0" height="5.7" fill="#a09080"/>
<rect x="798.2" y="108.8" width="1.2" height="5.7" fill="#5a5050"/>
<rect x="799.7" y="109.1" width="1.0" height="5.4" fill="#6a7088"/>
<rect x="801.0" y="108.2" width="1.0" height="6.3" fill="#4a5a7a"/>
<rect x="803.6" y="108.2" width="1.2" height="6.3" fill="#50506a"/>
<rect x="805.1" y="107.6" width="1.5" height="6.9" fill="#7a6a6a"/>
<rect x="806.8" y="109.1" width="1.2" height="5.4" fill="#a09080"/>
<rect x="808.3" y="107.9" width="1.5" height="6.6" fill="#5a5050"/>
<rect x="810.0" y="107.8" width="1.0" height="6.7" fill="#a09080"/>
<rect x="772.0" y="117.7" width="1.0" height="4.8" fill="#4a5a7a"/>
<rect x="773.2" y="117.7" width="0.8" height="4.8" fill="#8a5050"/>
<rect x="774.3" y="116.9" width="1.5" height="5.6" fill="#6a7088"/>
<rect x="776.0" y="117.5" width="1.5" height="5.0" fill="#3a3a4a"/>
<rect x="782.5" y="116.8" width="0.8" height="5.7" fill="#a09080"/>
<rect x="783.5" y="116.5" width="1.5" height="6.0" fill="#50506a"/>
<rect x="785.3" y="116.8" width="0.8" height="5.7" fill="#4a5a7a"/>
<rect x="786.3" y="116.7" width="1.2" height="5.8" fill="#7a6a6a"/>
<rect x="791.2" y="116.7" width="1.0" height="5.8" fill="#a09080"/>
<rect x="798.8" y="117.6" width="0.8" height="4.9" fill="#a09080"/>
<rect x="799.8" y="117.8" width="0.8" height="4.7" fill="#7a7a8a"/>
<rect x="800.9" y="118.2" width="1.5" height="4.3" fill="#50506a"/>
<rect x="805.6" y="116.8" width="1.2" height="5.7" fill="#5a5050"/>
<rect x="807.1" y="116.7" width="1.5" height="5.8" fill="#5a5050"/>
<rect x="774.1" y="126.9" width="1.2" height="4.6" fill="#5a5050"/>
<rect x="778.6" y="126.8" width="0.8" height="4.7" fill="#7a7a8a"/>
<rect x="779.6" y="126.3" width="1.5" height="5.2" fill="#9a8a7a"/>
<rect x="782.5" y="125.8" width="1.5" height="5.7" fill="#9a8a7a"/>
<rect x="786.0" y="126.7" width="1.2" height="4.8" fill="#5a5050"/>
<rect x="787.5" y="125.8" width="1.5" height="5.7" fill="#5a5050"/>
<rect x="789.2" y="125.7" width="1.2" height="5.8" fill="#7a7a8a"/>
<rect x="790.7" y="126.9" width="1.5" height="4.6" fill="#3a3a4a"/>
<rect x="792.5" y="126.0" width="0.8" height="5.5" fill="#9a8a7a"/>
<rect x="793.5" y="126.1" width="1.5" height="5.4" fill="#5a5050"/>
<rect x="798.6" y="126.8" width="1.2" height="4.7" fill="#3a3a4a"/>
<rect x="800.1" y="125.2" width="1.0" height="6.3" fill="#9a8a7a"/>
<rect x="801.3" y="125.9" width="1.2" height="5.6" fill="#6a7088"/>
<rect x="802.8" y="126.7" width="0.8" height="4.8" fill="#4a5a7a"/>
<rect x="803.8" y="125.5" width="1.5" height="6.0" fill="#a09080"/>
<rect x="805.6" y="125.6" width="0.8" height="5.9" fill="#b04a4a"/>
<rect x="810.3" y="125.7" width="0.8" height="5.8" fill="#3a3a4a"/>
<rect x="782.5" y="135.3" width="1.0" height="5.2" fill="#7a6a6a"/>
<rect x="783.8" y="134.6" width="0.8" height="5.9" fill="#6a7088"/>
<rect x="784.8" y="135.9" width="1.2" height="4.6" fill="#a09080"/>
<rect x="787.9" y="135.8" width="0.8" height="4.7" fill="#9a8a7a"/>
<rect x="788.9" y="135.5" width="1.0" height="5.0" fill="#8a5050"/>
<rect x="790.1" y="134.6" width="1.0" height="5.9" fill="#3a3a4a"/>
<rect x="791.4" y="135.2" width="1.2" height="5.3" fill="#9a8a7a"/>
<rect x="792.9" y="135.2" width="1.5" height="5.3" fill="#50506a"/>
<rect x="797.0" y="134.1" width="1.5" height="6.4" fill="#3a3a4a"/>
<rect x="800.9" y="135.7" width="1.5" height="4.8" fill="#7a6a6a"/>
<rect x="802.6" y="134.2" width="1.5" height="6.3" fill="#7a7a8a"/>
<rect x="804.4" y="134.3" width="1.5" height="6.2" fill="#8a5050"/>
<rect x="806.1" y="135.7" width="1.2" height="4.8" fill="#7a7a8a"/>
<rect x="807.6" y="134.3" width="1.2" height="6.2" fill="#7a7a8a"/>
<rect x="809.0" y="134.3" width="1.2" height="6.2" fill="#a09080"/>
<rect x="810.5" y="135.4" width="1.2" height="5.1" fill="#6a7088"/>
<rect x="782.5" y="144.1" width="1.5" height="4.9" fill="#a09080"/>
<rect x="786.0" y="144.2" width="1.5" height="4.8" fill="#b04a4a"/>
<rect x="787.8" y="142.8" width="1.0" height="6.2" fill="#4a5a7a"/>
<rect x="789.0" y="143.0" width="0.8" height="6.0" fill="#3a3a4a"/>
<rect x="790.1" y="144.0" width="0.8" height="5.0" fill="#50506a"/>
<rect x="791.1" y="142.8" width="0.8" height="6.2" fill="#50506a"/>
<rect x="792.2" y="144.2" width="1.0" height="4.8" fill="#a09080"/>
<rect x="793.4" y="144.0" width="0.8" height="5.0" fill="#5a5050"/>
<rect x="797.0" y="144.3" width="0.8" height="4.7" fill="#7a6a6a"/>
<rect x="798.0" y="143.9" width="1.2" height="5.1" fill="#9a8a7a"/>
<rect x="799.5" y="143.1" width="1.5" height="5.9" fill="#5a5050"/>
<rect x="801.2" y="143.6" width="0.8" height="5.4" fill="#b04a4a"/>
<rect x="803.7" y="143.4" width="1.5" height="5.6" fill="#7a6a6a"/>
<rect x="769" y="134" width="12" height="19" fill="#d4cabb"/>
<rect x="815" y="102" width="39" height="51" fill="#e2ddd6"/>
<rect x="815" y="102" width="2.2" height="51" fill="#f4f0ea"/>
<rect x="852" y="102" width="2.2" height="51" fill="#f4f0ea"/>
<rect x="817" y="103.5" width="35" height="1.4" fill="#f2eee8"/>
<rect x="817" y="105" width="35" height="13" fill="#c8c0b8"/>
<path d="M823 110 h1.6 v8 h-1.6z M826 108 h1.4 v10 h-1.4z M829 109 h1.5 v9 h-1.5z" fill="#e8e4e0"/>
<path d="M832 108 h1.2 v10 h-1.2z M836 107 h2 v11 h-2z" fill="#3a4a7a"/>
<path d="M839 107 h2 v11 h-2z M842 106 h3 v12 h-3z M846 106 h5 v12 h-5z" fill="#c84040"/>
<path d="M834 108 h1.5 v10 h-1.5z" fill="#e6e0d8"/>
<rect x="817" y="118" width="35" height="2" fill="#f0ebe4"/>
<rect x="817" y="120" width="35" height="17" fill="#cfc8c0"/>
<path d="M832 123 h2 v12 h-2z M835 122 h2.5 v13 h-2.5z M838.5 123 h2 v12 h-2z M841.5 124 h2.5 v11 h-2.5z M845 125 h2 v10 h-2z" fill="#2e3c6c"/>
<path d="M834 123 h1 v12 h-1z M837.5 122 h1 v13 h-1z" fill="#d0d8e8"/>
<rect x="838" y="136" width="14" height="17" fill="#ecebe8"/>
<rect x="854.2" y="102" width="3.8" height="51" fill="#22304a"/><rect x="854.2" y="112" width="3.8" height="22" fill="#3a5a92"/>
<path d="M802 153 L804.5 137 Q812 132 818.5 131.5 L828.5 131.5 Q836 132 842 135.5 L846.5 153 Z" fill="#6c7686"/>
<path d="M818.5 131.5 L822 134 L826 134 L828.5 131.5 L830.5 153 H818 Z" fill="#bcd0e8"/>
<path d="M818.5 131.5 L816 136 L820 153 H813 L812 137 Z M828.5 131.5 L831.5 136 L829 153 H836 L837 137 Z" fill="#5e6878"/>
<ellipse cx="823.8" cy="123.5" rx="6.4" ry="8.3" fill="#b89484"/><ellipse cx="824.2" cy="124" rx="4.6" ry="6.8" fill="#cca898"/>
<rect x="821" y="130" width="6" height="3" fill="#b89080"/>
<path d="M817.2 122 Q816.5 114 824 114 Q831 114 830.6 122 L829.6 119 Q828 116.5 824 116.5 Q819.5 116.5 818.2 119 Z" fill="#3e3430"/>
<path d="M819.5 121.5 h3 M825 121.5 h3" stroke="#5a4038" stroke-width="0.9"/><path d="M822 128.5 h4" stroke="#8a6050" stroke-width="0.8"/>
</g>
<rect x="768" y="145.4" width="53" height="6.6" fill="#262626" opacity="0.78"/>
</svg>
<div class="vl" style="position:absolute;left:770px;top:44.2px;font-size:5.4px;font-weight:bold;color:#f4f4f4;white-space:nowrap;line-height:1">线下会场3</div>
<div class="vl" style="position:absolute;left:769px;top:146.3px;font-size:5.2px;color:#ddd;white-space:nowrap;line-height:1;transform:scaleX(0.95);transform-origin:0 0">Dominic Sachsenmaier</div>
<div class="a" style="left:797px;top:72px;width:34px;height:8px;background:#191919;border-radius:2px"></div>
<div class="vl" style="position:absolute;left:800px;top:73.6px;font-size:5.6px;font-weight:bold;color:#f2f2f2;white-space:nowrap;line-height:1">线下会场2</div>
<div class="a" style="left:797px;top:174px;width:34px;height:8px;background:#191919;border-radius:2px"></div>
<div class="vl" style="position:absolute;left:800px;top:176.4px;font-size:5.6px;font-weight:bold;color:#f2f2f2;white-space:nowrap;line-height:1">线下会场1</div>

</body></html>
